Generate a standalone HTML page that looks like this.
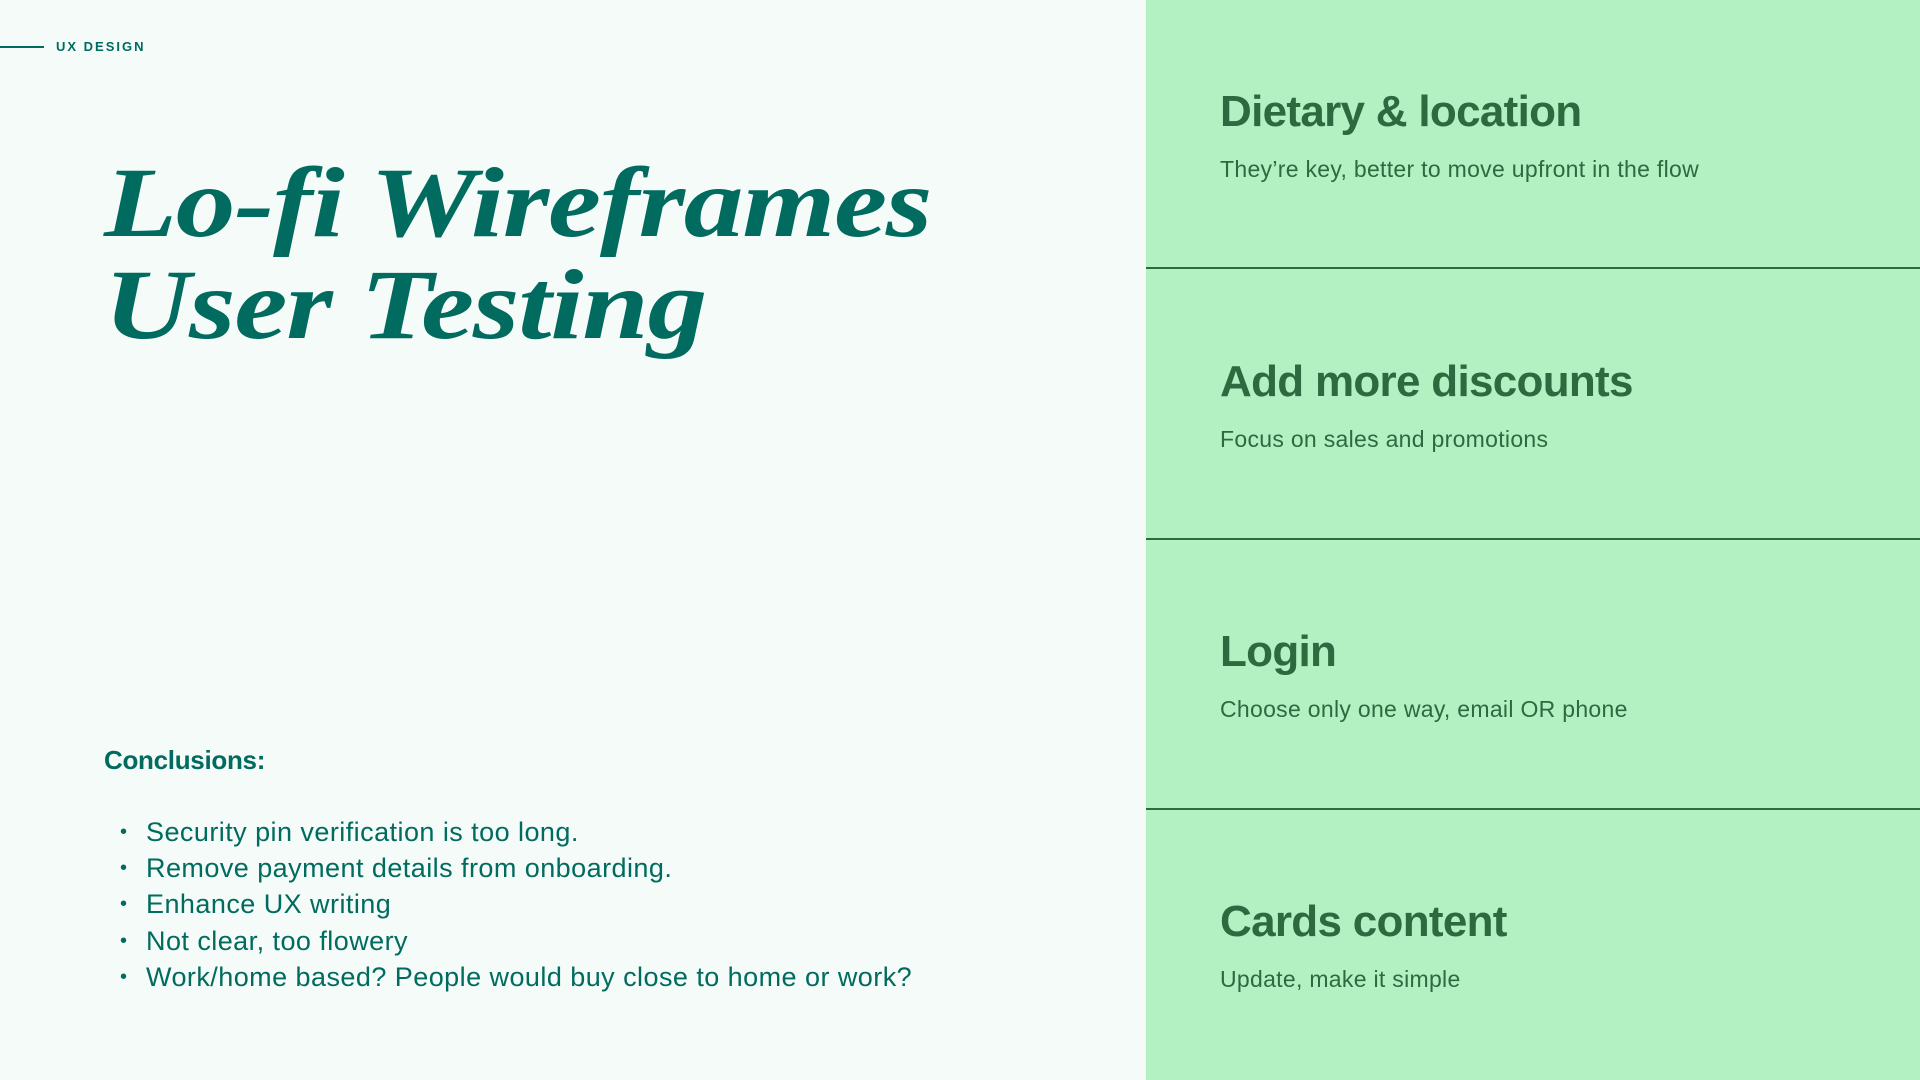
<!DOCTYPE html>
<html><head><meta charset="utf-8"><style>
*{margin:0;padding:0;box-sizing:border-box}
body{width:1920px;height:1080px;background:#f4fbf8;position:relative;overflow:hidden;font-family:"Liberation Sans",sans-serif}
.line{position:absolute;left:0;top:46px;width:44px;height:1.5px;background:#006b5e}
.tag{position:absolute;left:56px;top:39px;font-size:13px;font-weight:bold;letter-spacing:2px;color:#006b5e}
.title{position:absolute;left:104px;top:152px;font-family:"Liberation Serif",serif;font-style:italic;font-weight:bold;font-size:100px;line-height:102px;color:#006b5e;letter-spacing:-1px;transform:scaleX(1.195);transform-origin:0 0;white-space:nowrap}
.conc{position:absolute;left:104px;top:745px;font-size:26px;font-weight:bold;color:#006b5e;letter-spacing:-0.3px}
ul{position:absolute;left:146px;top:814px;list-style:none;color:#006b5e;font-size:27px;line-height:36.2px;letter-spacing:0.45px}
li{position:relative}
li:before{content:"•";position:absolute;left:-26px;font-size:20px}
.panel{position:absolute;left:1146px;top:0;width:774px;height:1080px;background:#b3f1c3}
.sep{position:absolute;left:1146px;width:774px;height:2px;background:#2d6a3f}
.h{position:absolute;left:1220px;font-size:44px;font-weight:bold;color:#2d6a3f;letter-spacing:-0.7px}
.s{position:absolute;left:1220px;font-size:23px;color:#2d6a3f;letter-spacing:0.3px}
</style></head><body>
<div class="line"></div><div class="tag">UX DESIGN</div>
<div class="title">Lo-fi Wireframes<br>User Testing</div>
<div class="conc">Conclusions:</div>
<ul>
<li>Security pin verification is too long.</li>
<li>Remove payment details from onboarding.</li>
<li>Enhance UX writing</li>
<li>Not clear, too flowery</li>
<li>Work/home based? People would buy close to home or work?</li>
</ul>
<div class="panel"></div>
<div class="sep" style="top:267px"></div>
<div class="sep" style="top:538px"></div>
<div class="sep" style="top:808px"></div>
<div class="h" style="top:87px">Dietary &amp; location</div>
<div class="s" style="top:156px">They’re key, better to move upfront in the flow</div>
<div class="h" style="top:357px">Add more discounts</div>
<div class="s" style="top:426px">Focus on sales and promotions</div>
<div class="h" style="top:627px">Login</div>
<div class="s" style="top:696px">Choose only one way, email OR phone</div>
<div class="h" style="top:897px">Cards content</div>
<div class="s" style="top:966px">Update, make it simple</div>
</body></html>
